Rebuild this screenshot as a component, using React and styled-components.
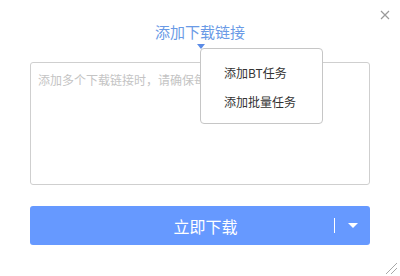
import React from 'react'
import styled, { createGlobalStyle } from 'styled-components'

const GlobalStyle = createGlobalStyle`
  html, body {
    margin: 0;
    padding: 0;
    background: #fff;
  }
  body {
    font-family: "Noto Sans CJK SC", "Noto Sans", sans-serif;
  }
`

const Dialog = styled.div`
  position: relative;
  width: 400px;
  height: 276px;
  box-sizing: border-box;
  padding: 22px 30px 0;
  display: flex;
  flex-direction: column;
  background: #fff;
  overflow: hidden;
`

const Title = styled.div`
  font-size: 15px;
  line-height: 20px;
  text-align: center;
  color: #6a9ae6;
`

const CloseButton = styled.div`
  position: absolute;
  top: 10px;
  right: 10px;
  width: 10px;
  height: 10px;
  display: flex;
`

const Links = styled.textarea`
  display: block;
  box-sizing: border-box;
  width: 100%;
  height: 123px;
  margin-top: 20px;
  padding: 8px 7px;
  border: 1px solid #cfcfcf;
  border-radius: 3px;
  resize: none;
  outline: none;
  font-family: inherit;
  font-size: 12px;
  line-height: 18px;
  color: #333;
  &::placeholder {
    color: #c4c4c4;
  }
`

const DownloadButton = styled.div`
  display: flex;
  align-items: center;
  box-sizing: border-box;
  height: 39px;
  margin-top: 21px;
  border-radius: 3px;
  background: #6699ff;
  color: #fff;
  cursor: pointer;
`

const Label = styled.div`
  flex: 1;
  padding-left: 47px;
  text-align: center;
  font-size: 16px;
  line-height: 20px;
`

const Divider = styled.div`
  width: 1px;
  height: 15px;
  background: #fff;
`

const Caret = styled.div`
  width: 0;
  height: 0;
  margin: 0 12px 0 13px;
  border-left: 5px solid transparent;
  border-right: 5px solid transparent;
  border-top: 5px solid #fff;
`

const Pointer = styled.div`
  position: absolute;
  left: 197px;
  top: 44px;
  width: 0;
  height: 0;
  border-left: 4px solid transparent;
  border-right: 4px solid transparent;
  border-top: 5px solid #5b8be6;
`

const Menu = styled.div`
  position: absolute;
  left: 200px;
  top: 48px;
  width: 123px;
  height: 76px;
  box-sizing: border-box;
  padding: 10px 0 0 23px;
  display: flex;
  flex-direction: column;
  border: 1px solid #c6c6c6;
  border-radius: 4px;
  background: #fff;
`

const MenuItem = styled.div`
  font-size: 12px;
  line-height: 28.5px;
  color: #333;
  white-space: nowrap;
`

const Grip = styled.div`
  position: absolute;
  right: 2px;
  bottom: 1px;
  width: 14px;
  height: 14px;
  display: flex;
`

export default function App() {
  return (
    <>
      <GlobalStyle />
      <Dialog>
        <Title>添加下载链接</Title>
        <CloseButton>
          <svg width="10" height="10" viewBox="0 0 10 10">
            <path d="M1 1L9 9M9 1L1 9" stroke="#9a9a9a" strokeWidth="1.2" />
          </svg>
        </CloseButton>
        <Links placeholder="添加多个下载链接时，请确保每行只有一个链接" />
        <DownloadButton>
          <Label>立即下载</Label>
          <Divider />
          <Caret />
        </DownloadButton>
        <Pointer />
        <Menu>
          <MenuItem>添加BT任务</MenuItem>
          <MenuItem>添加批量任务</MenuItem>
        </Menu>
        <Grip>
          <svg width="14" height="14" viewBox="0 0 14 14">
            <path d="M2 13L13 2M7 13L13 7" stroke="#a8a8a8" strokeWidth="1" />
          </svg>
        </Grip>
      </Dialog>
    </>
  )
}
